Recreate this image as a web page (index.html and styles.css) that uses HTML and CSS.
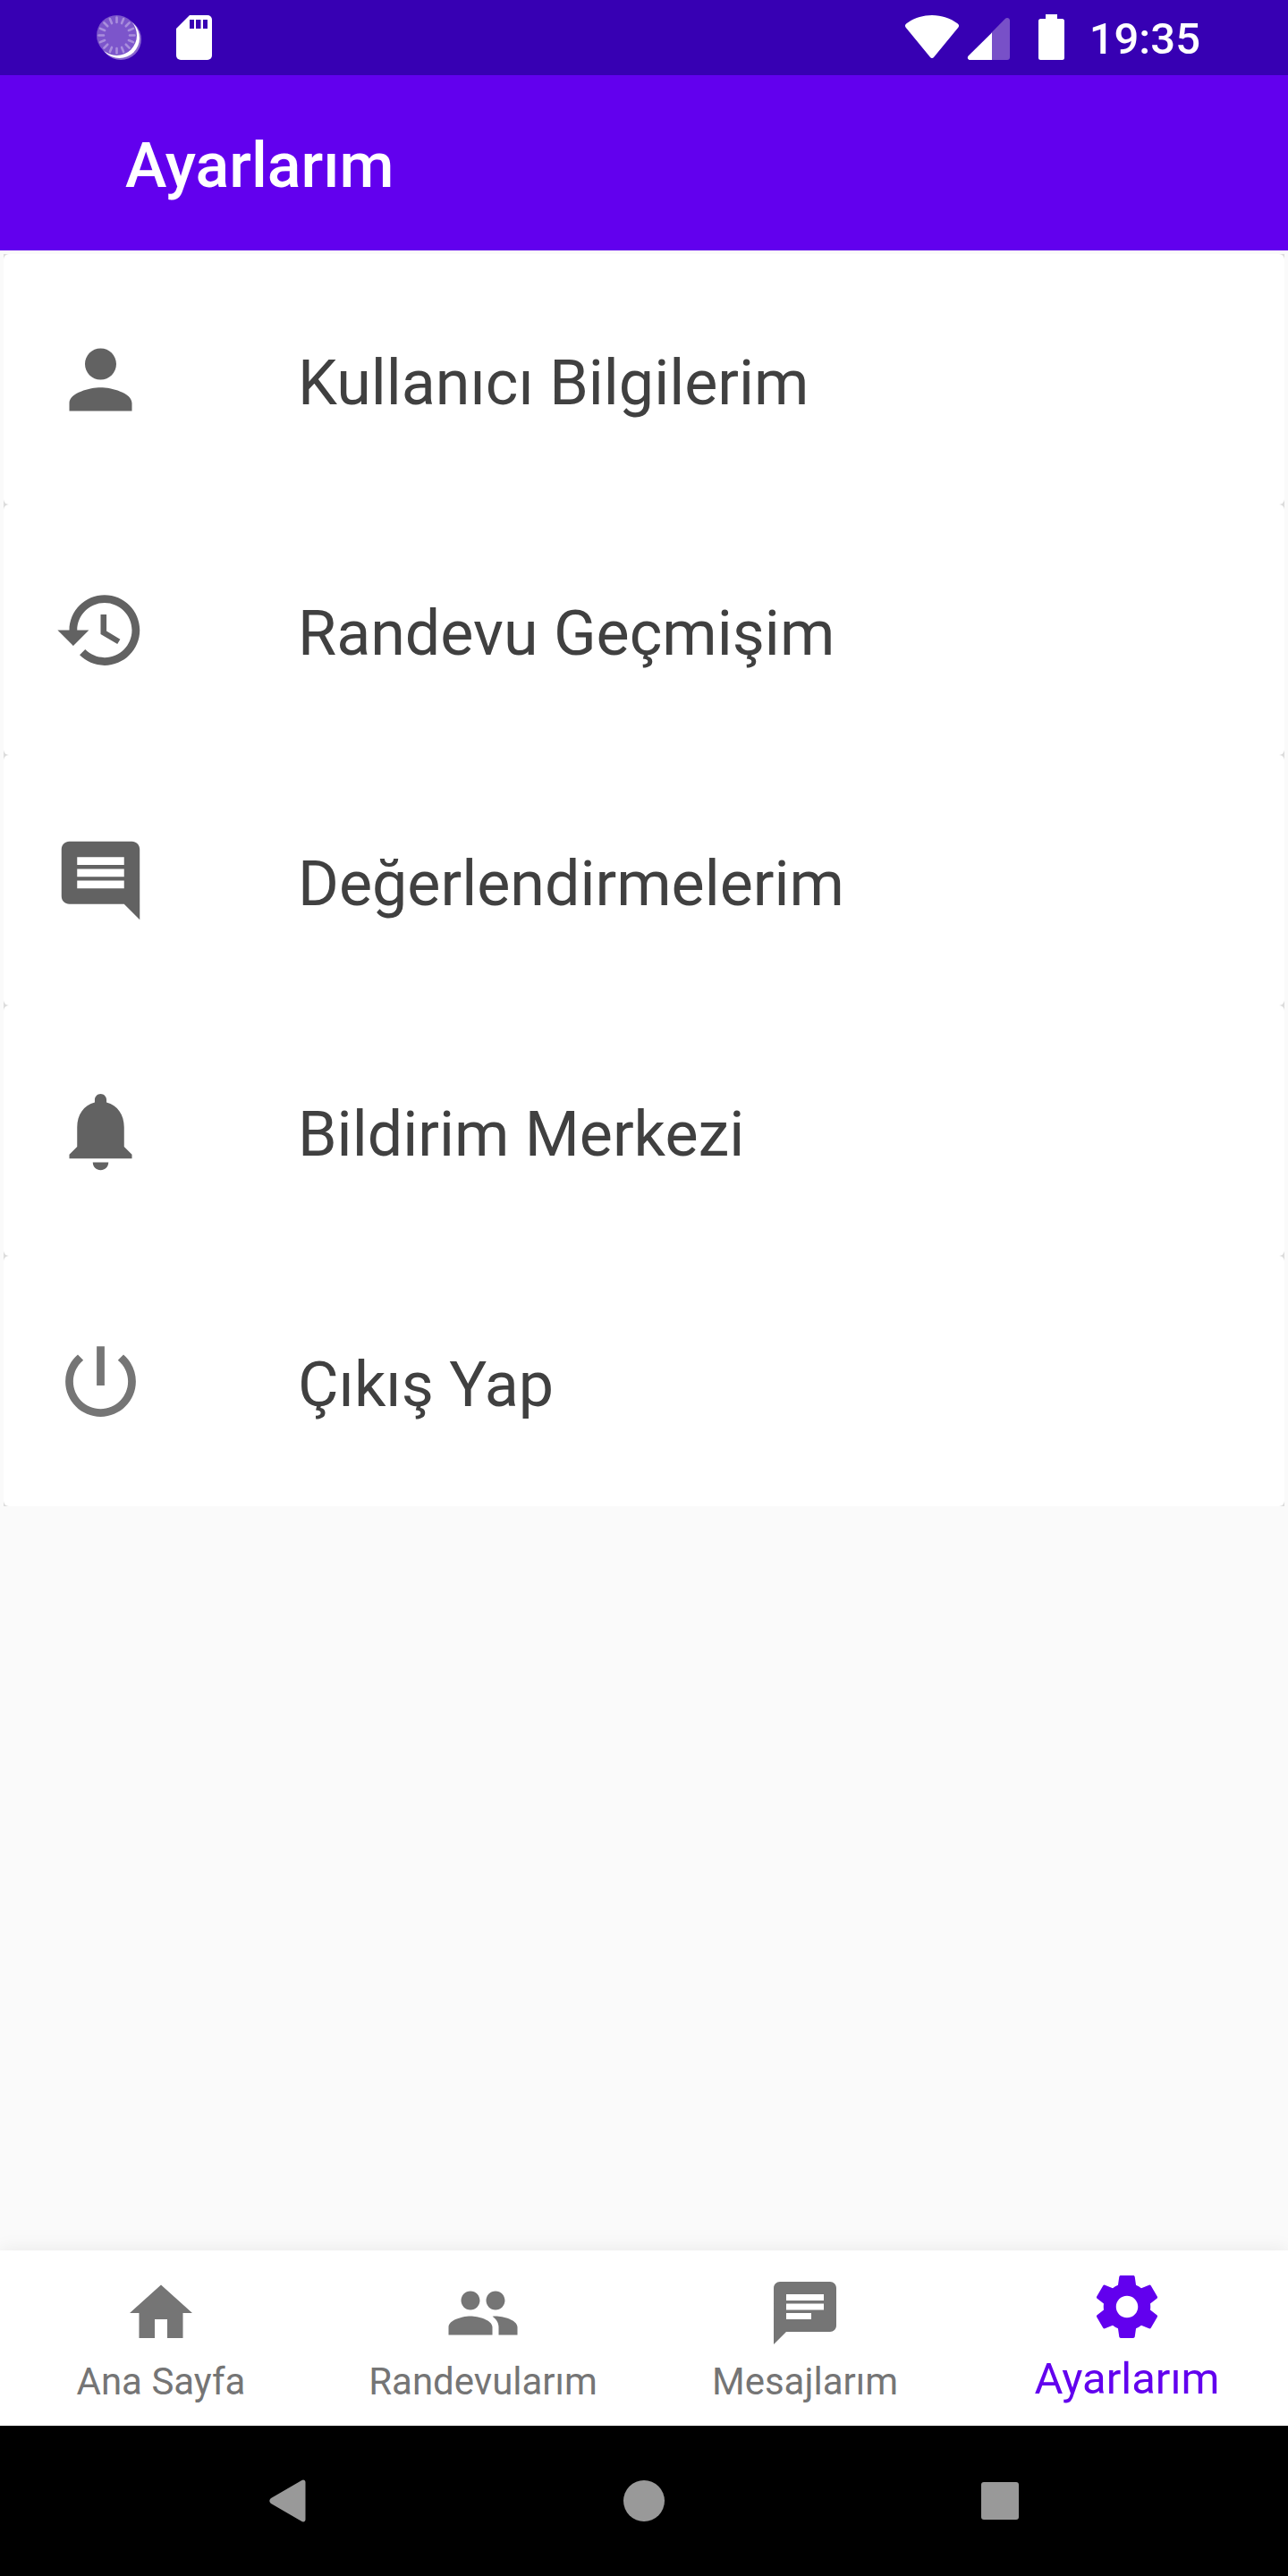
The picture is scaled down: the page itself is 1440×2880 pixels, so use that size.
FILE: index.html
```html
<!DOCTYPE html>
<html lang="tr">
<head>
<meta charset="utf-8">
<meta name="viewport" content="width=device-width, initial-scale=1">
<title>Ayarlarım</title>
<link rel="stylesheet" href="styles.css">
</head>
<body>
<div class="screen">
  <div class="status-bar">
    <div class="status-group status-notifications">
      <svg width="50" height="50" viewBox="0 0 50 50" aria-hidden="true">
        <circle cx="27" cy="27" r="23" fill="#8966cf"/>
        <circle cx="25.500" cy="25.500" r="22.500" fill="#fff"/>
        <circle cx="22.500" cy="22.500" r="22.500" fill="#7c55cb"/>
        <g stroke="#a98edd" stroke-width="2.600" stroke-linecap="round">
          <path id="ray" d="M22.500 2.500v5.500M22.500 37v5.500M2.500 22.500H8M37 22.500h5.500"/>
          <use href="#ray" transform="rotate(22.500 22.500 22.500)"/>
          <use href="#ray" transform="rotate(45 22.500 22.500)"/>
          <use href="#ray" transform="rotate(67.500 22.500 22.500)"/>
        </g>
      </svg>
      <svg width="40" height="50" viewBox="0 0 40 50" aria-hidden="true">
        <path fill="#fff" d="M15 0h20a5 5 0 0 1 5 5v40a5 5 0 0 1-5 5H5a5 5 0 0 1-5-5V15z"/>
        <path fill="#3700b3" d="M15 5h5v10h-5zM22 5h5.500v10H22zM30 5h5v10h-5z"/>
      </svg>
    </div>
    <div class="status-group status-system">
      <div class="status-signal">
        <svg width="60" height="50" viewBox="0 0 60 50" aria-hidden="true">
          <path fill="#fff" d="M30 0c11 0 20.500 3.500 28.500 9.200 1.800 1.300 2 3 .8 4.500L32.200 46.700c-1.300 1.600-3.100 1.600-4.400 0L.7 13.700C-.5 12.200-.3 10.500 1.500 9.200 9.500 3.500 19 0 30 0z"/>
        </svg>
        <svg width="48" height="50" viewBox="0 0 48 50" aria-hidden="true">
          <path fill="#7850c8" d="M27 20 42.500 4.200C44.500 2.200 48 3 48 6v41a3 3 0 0 1-3 3H27z"/>
          <path fill="#fff" d="M28 19.500V50H3.500C1 50 0 47 1.600 45.400z"/>
        </svg>
      </div>
      <svg width="29" height="51" viewBox="0 0 29 51" aria-hidden="true">
        <path fill="#fff" d="M8 0h13v5h5.500A2.500 2.500 0 0 1 29 7.500v41a2.500 2.500 0 0 1-2.500 2.500h-24A2.500 2.500 0 0 1 0 48.500v-41A2.500 2.500 0 0 1 2.500 5H8z"/>
      </svg>
      <time class="clock">19:35</time>
    </div>
  </div>

  <header class="app-bar">
    <h1 class="app-title">Ayarlarım</h1>
  </header>

  <main class="content">
    <div class="settings">
      <button class="setting" type="button">
        <svg class="setting-icon" viewBox="0 0 24 24" aria-hidden="true"><path d="M12 12c2.210 0 4-1.790 4-4s-1.790-4-4-4-4 1.790-4 4 1.790 4 4 4zm0 2c-2.670 0-8 1.340-8 4v2h16v-2c0-2.660-5.330-4-8-4z"/></svg>
        <span class="setting-label">Kullanıcı Bilgilerim</span>
      </button>
      <button class="setting" type="button">
        <svg class="setting-icon" viewBox="0 0 24 24" aria-hidden="true"><path d="M13 3c-4.970 0-9 4.030-9 9H1l3.890 3.890.07.14L9 12H6c0-3.870 3.130-7 7-7s7 3.130 7 7-3.130 7-7 7c-1.930 0-3.680-.79-4.940-2.060l-1.420 1.420C8.270 19.990 10.510 21 13 21c4.970 0 9-4.030 9-9s-4.030-9-9-9zm-1 5v5l4.280 2.540.72-1.210-3.500-2.080V8H12z"/></svg>
        <span class="setting-label">Randevu Geçmişim</span>
      </button>
      <button class="setting" type="button">
        <svg class="setting-icon" viewBox="0 0 24 24" aria-hidden="true"><path d="M21.990 4c0-1.100-.89-2-1.990-2H4c-1.100 0-2 .9-2 2v12c0 1.100.9 2 2 2h14l4 4-.01-18zM18 14H6v-2h12v2zm0-3H6V9h12v2zm0-3H6V6h12v2z"/></svg>
        <span class="setting-label">Değerlendirmelerim</span>
      </button>
      <button class="setting" type="button">
        <svg class="setting-icon" viewBox="0 0 24 24" aria-hidden="true"><path d="M12 22c1.100 0 2-.9 2-2h-4c0 1.100.89 2 2 2zm6-6v-5c0-3.070-1.640-5.640-4.500-6.320V4c0-.83-.67-1.500-1.500-1.500s-1.500.67-1.500 1.500v.68C7.630 5.360 6 7.920 6 11v5l-2 2v1h16v-1l-2-2z"/></svg>
        <span class="setting-label">Bildirim Merkezi</span>
      </button>
      <button class="setting" type="button">
        <svg class="setting-icon setting-icon-light" viewBox="0 0 24 24" aria-hidden="true"><path d="M13 3h-2v10h2V3zm4.830 2.170l-1.420 1.420C17.990 7.860 19 9.810 19 12c0 3.870-3.130 7-7 7s-7-3.130-7-7c0-2.190 1.010-4.140 2.580-5.420L6.170 5.170C4.230 6.820 3 9.260 3 12c0 4.970 4.030 9 9 9s9-4.030 9-9c0-2.740-1.230-5.180-3.170-6.830z"/></svg>
        <span class="setting-label">Çıkış Yap</span>
      </button>
    </div>
  </main>

  <nav class="tabs">
    <a class="tab" href="#ana-sayfa">
      <svg class="tab-icon" viewBox="0 0 24 24" aria-hidden="true"><path d="M10 20v-6h4v6h5v-8h3L12 3 2 12h3v8z"/></svg>
      <span>Ana Sayfa</span>
    </a>
    <a class="tab" href="#randevularim">
      <svg class="tab-icon" viewBox="0 0 24 24" aria-hidden="true"><path d="M16 11c1.660 0 2.990-1.340 2.990-3S17.660 5 16 5c-1.660 0-3 1.340-3 3s1.340 3 3 3zm-8 0c1.660 0 2.990-1.340 2.990-3S9.660 5 8 5C6.340 5 5 6.340 5 8s1.340 3 3 3zm0 2c-2.330 0-7 1.170-7 3.500V19h14v-2.500c0-2.330-4.670-3.500-7-3.500zm8 0c-.29 0-.62.02-.97.05 1.160.84 1.970 1.970 1.970 3.450V19h6v-2.500c0-2.330-4.670-3.500-7-3.500z"/></svg>
      <span>Randevularım</span>
    </a>
    <a class="tab" href="#mesajlarim">
      <svg class="tab-icon" viewBox="0 0 24 24" aria-hidden="true"><path d="M20 2H4c-1.100 0-1.990.9-1.990 2L2 22l4-4h14c1.100 0 2-.9 2-2V4c0-1.100-.9-2-2-2zM6 9h12v2H6V9zm8 5H6v-2h8v2zm4-6H6V6h12v2z"/></svg>
      <span>Mesajlarım</span>
    </a>
    <a class="tab tab-active" href="#ayarlarim" aria-current="page">
      <svg class="tab-icon" viewBox="0 0 24 24" aria-hidden="true"><path d="M19.430 12.980c.04-.32.07-.64.07-.98s-.03-.66-.07-.98l2.110-1.650c.19-.15.24-.42.12-.64l-2-3.460c-.12-.22-.39-.3-.61-.22l-2.490 1c-.52-.4-1.080-.73-1.690-.98l-.38-2.650C14.460 2.180 14.250 2 14 2h-4c-.25 0-.46.18-.49.42l-.38 2.650c-.61.25-1.170.59-1.690.98l-2.490-1c-.23-.09-.49 0-.61.22l-2 3.460c-.13.22-.07.49.12.64l2.110 1.650c-.04.32-.07.65-.07.98s.03.66.07.98l-2.110 1.650c-.19.15-.24.42-.12.64l2 3.460c.12.22.39.3.61.22l2.490-1c.52.4 1.080.73 1.690.98l.38 2.650c.03.24.24.42.49.42h4c.25 0 .46-.18.49-.42l.38-2.650c.61-.25 1.170-.59 1.690-.98l2.490 1c.23.09.49 0 .61-.22l2-3.460c.12-.22.07-.49-.12-.64l-2.110-1.650zM12 15.500c-1.930 0-3.500-1.570-3.500-3.500s1.570-3.500 3.500-3.500 3.500 1.570 3.500 3.500-1.570 3.500-3.500 3.500z"/></svg>
      <span>Ayarlarım</span>
    </a>
  </nav>

  <div class="system-nav">
    <button class="system-button" type="button" aria-label="Geri">
      <svg width="48" height="48" viewBox="0 0 48 48" aria-hidden="true"><path d="M39 1.300c2-1.500 4.500-.6 4.500 2v41.400c0 2.600-2.500 3.500-4.500 2L5 27c-2.200-1.700-2.200-4.300 0-6z"/></svg>
    </button>
    <button class="system-button" type="button" aria-label="Ana ekran">
      <svg width="48" height="48" viewBox="0 0 48 48" aria-hidden="true"><circle cx="24" cy="24" r="23"/></svg>
    </button>
    <button class="system-button" type="button" aria-label="Son uygulamalar">
      <svg width="48" height="48" viewBox="0 0 48 48" aria-hidden="true"><rect x="3" y="3" width="42" height="42" rx="3"/></svg>
    </button>
  </div>
</div>
</body>
</html>
```
FILE: styles.css
```css
* {
  box-sizing: border-box;
}

body {
  margin: 0;
  background: #fafafa;
  font-family: Roboto, "Liberation Sans", sans-serif;
}

svg {
  display: block;
  flex: none;
}

button {
  margin: 0;
  padding: 0;
  border: 0;
  background: none;
  color: inherit;
  font: inherit;
  text-align: left;
  cursor: pointer;
}

.screen {
  display: flex;
  flex-direction: column;
  min-height: 100vh;
}

/* Status bar */
.status-bar {
  display: flex;
  justify-content: space-between;
  align-items: flex-end;
  min-height: 84px;
  padding: 0 98px 17px 108px;
  background: #3700b3;
}

.status-group {
  display: flex;
  align-items: flex-end;
}

.status-notifications {
  gap: 39px;
}

.status-system {
  gap: 28px;
}

.status-signal {
  display: flex;
  gap: 9px;
  margin-right: 4px;
}

.clock {
  color: #fff;
  font-size: 49px;
  font-weight: 500;
  line-height: 46px;
}

/* App bar */
.app-bar {
  display: flex;
  align-items: center;
  min-height: 196px;
  padding: 6px 140px 0;
  background: #6200ee;
}

.app-title {
  margin: 0;
  color: #fff;
  font-size: 70px;
  font-weight: 500;
  line-height: 84px;
}

/* Settings list */
.content {
  flex: 1;
  padding: 4px;
}

.settings {
  display: flex;
  flex-direction: column;
  background: #dcdcdc;
}

.setting {
  display: flex;
  align-items: center;
  gap: 168px;
  min-height: 280px;
  padding: 0 56px;
  border-radius: 6px;
  background: #fff;
}

.setting-icon {
  width: 105px;
  height: 105px;
  fill: #626262;
}

.setting-icon-light {
  fill: #757575;
}

.setting-label {
  padding-top: 8px;
  color: #404040;
  font-size: 70px;
  line-height: 84px;
}

/* Bottom tabs */
.tabs {
  display: grid;
  grid-template-columns: repeat(4, 1fr);
  min-height: 196px;
  background: #fff;
  box-shadow: 0 0 20px rgba(0, 0, 0, 0.08);
}

.tab {
  display: flex;
  flex-direction: column;
  align-items: center;
  gap: 11px;
  padding-top: 28px;
  color: #757575;
  font-size: 42px;
  line-height: 48px;
  text-decoration: none;
}

.tab-active {
  padding-top: 21px;
  color: #6200ee;
  font-size: 49px;
  line-height: 56px;
}

.tab-icon {
  width: 84px;
  height: 84px;
  fill: currentColor;
}

/* System navigation */
.system-nav {
  position: relative;
  display: grid;
  grid-template-columns: repeat(3, 1fr);
  min-height: 168px;
  padding: 0 123px;
  background: #000;
}

.system-button {
  display: flex;
  align-items: center;
  justify-content: center;
  fill: #999;
}
```
